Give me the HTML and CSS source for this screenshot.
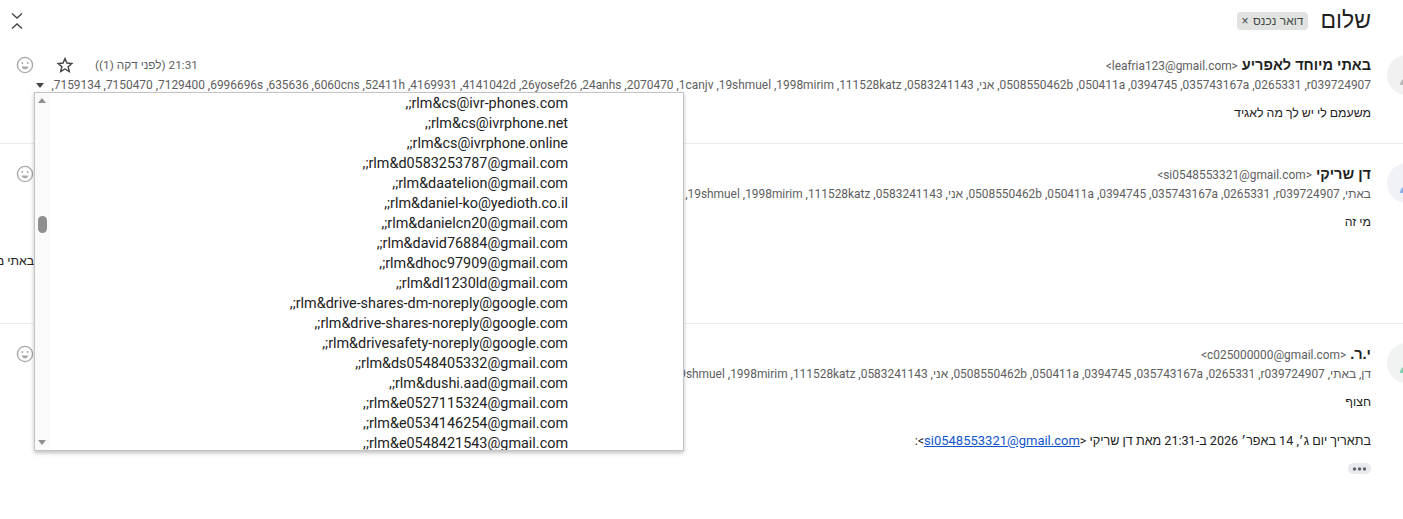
FILE: index.html
```html
<!DOCTYPE html>
<html lang="he" dir="rtl">
<head>
<meta charset="utf-8">
<title>שלום</title>
<link rel="stylesheet" href="styles.css">
</head>
<body>
<main class="thread">
  <header class="subject-bar">
    <h1 class="subject">שלום</h1>
    <span class="chip">דואר נכנס <span class="chip-x">×</span></span>
    <span class="spacer"></span>
    <svg class="collapse" width="12" height="16" viewBox="0 0 12 16" fill="none" stroke="#444746" stroke-width="1.4"><path d="M1 .5l5 4.500 5-4.500M1 15.500l5-4.500 5 4.500"/></svg>
  </header>

  <article class="msg msg-first">
    <div class="avatar avatar-grey"><svg width="40" height="40" viewBox="0 0 40 40"><path d="M13 30c0-3 2-7 7-7s7 4 7 7z" fill="#b9b9b9"/></svg></div>
    <div class="msg-main">
      <div class="head">
        <div class="from"><b class="name">באתי מיוחד לאפריע</b> <span class="addr">&lt;leafria123@gmail.com&gt;</span></div>
        <div class="meta">
          <span class="time">21:31 (לפני דקה (1))</span>
          <svg class="star" width="18" height="18" viewBox="0 0 24 24" fill="none" stroke="#444746" stroke-width="1.9" stroke-linejoin="miter"><path d="M12 3.4l2.6 6 6.5.6-4.9 4.3 1.5 6.4-5.7-3.4-5.7 3.4 1.5-6.4L2.900 10l6.500-.6z"/></svg>
          <svg class="smile" width="18" height="18" viewBox="0 0 18 18" fill="none" stroke="#a8a8a8" stroke-width="1.4"><circle cx="9" cy="9" r="7.600"/><circle cx="6.300" cy="7" r="1" fill="#a8a8a8" stroke="none"/><circle cx="11.700" cy="7" r="1" fill="#a8a8a8" stroke="none"/><path d="M5.500 10.500h7c-.6 1.900-2 2.800-3.500 2.800s-2.900-.9-3.500-2.800z" fill="#a8a8a8" stroke="none"/></svg>
        </div>
      </div>
      <div class="to">r039724907,&rlm; 0265331,&rlm; 035743167a,&rlm; 0394745,&rlm; 050411a,&rlm; 0508550462b,&rlm; אני,&rlm; 0583241143,&rlm; 111528katz,&rlm; 1998mirim,&rlm; 19shmuel,&rlm; 1canjv,&rlm; 2070470,&rlm; 24anhs,&rlm; 26yosef26,&rlm; 4141042d,&rlm; 4169931,&rlm; 52411h,&rlm; 6060cns,&rlm; 635636,&rlm; 6996696s,&rlm; 7129400,&rlm; 7150470,&rlm; 7159134,&rlm;<span class="to-arrow"></span></div>
      <p class="body">משעמם לי יש לך מה לאגיד</p>
    </div>
  </article>

  <article class="msg msg-second">
    <div class="avatar avatar-blue"><svg width="40" height="40" viewBox="0 0 40 40"><path d="M13 30c0-3 2-7 7-7s7 4 7 7z" fill="#86b2f2"/></svg></div>
    <div class="msg-main">
      <div class="head">
        <div class="from"><b class="name">דן שריקי</b> <span class="addr">&lt;si0548553321@gmail.com&gt;</span></div>
        <div class="meta">
          <svg class="smile" width="18" height="18" viewBox="0 0 18 18" fill="none" stroke="#a8a8a8" stroke-width="1.4"><circle cx="9" cy="9" r="7.600"/><circle cx="6.300" cy="7" r="1" fill="#a8a8a8" stroke="none"/><circle cx="11.700" cy="7" r="1" fill="#a8a8a8" stroke="none"/><path d="M5.500 10.500h7c-.6 1.900-2 2.800-3.500 2.800s-2.900-.9-3.500-2.800z" fill="#a8a8a8" stroke="none"/></svg>
        </div>
      </div>
      <div class="to">באתי,&rlm; r039724907,&rlm; 0265331,&rlm; 035743167a,&rlm; 0394745,&rlm; 050411a,&rlm; 0508550462b,&rlm; אני,&rlm; 0583241143,&rlm; 111528katz,&rlm; 1998mirim,&rlm; 19shmuel,&rlm; 1canjv,&rlm; 2070470,&rlm; 24anhs,&rlm; 26yosef26,&rlm; 4141042d,&rlm; 4169931</div>
      <p class="body">מי זה</p>
      <p class="body-far">באתי מיוחד לאפריע</p>
    </div>
  </article>

  <article class="msg msg-third">
    <div class="avatar avatar-green"><svg width="40" height="40" viewBox="0 0 40 40"><path d="M13 30c0-3 2-7 7-7s7 4 7 7z" fill="#7fd0ae"/></svg></div>
    <div class="msg-main">
      <div class="head">
        <div class="from"><b class="name">י.ר.</b> <span class="addr">&lt;c025000000@gmail.com&gt;</span></div>
        <div class="meta">
          <svg class="smile" width="18" height="18" viewBox="0 0 18 18" fill="none" stroke="#a8a8a8" stroke-width="1.4"><circle cx="9" cy="9" r="7.600"/><circle cx="6.300" cy="7" r="1" fill="#a8a8a8" stroke="none"/><circle cx="11.700" cy="7" r="1" fill="#a8a8a8" stroke="none"/><path d="M5.500 10.500h7c-.6 1.900-2 2.800-3.500 2.800s-2.900-.9-3.500-2.800z" fill="#a8a8a8" stroke="none"/></svg>
        </div>
      </div>
      <div class="to">דן,&rlm; באתי,&rlm; r039724907,&rlm; 0265331,&rlm; 035743167a,&rlm; 0394745,&rlm; 050411a,&rlm; 0508550462b,&rlm; אני,&rlm; 0583241143,&rlm; 111528katz,&rlm; 1998mirim,&rlm; 19shmuel,&rlm; 1canjv,&rlm; 2070470,&rlm; 24anhs,&rlm; 26yosef26,&rlm; 4141042d</div>
      <p class="body">חצוף</p>
      <p class="body quote">בתאריך יום ג׳, 14 באפר׳ 2026 ב-21:31 מאת דן שריקי &lt;<a class="link" href="#">si0548553321@gmail.com</a>&gt;:</p>
      <button class="more" type="button" aria-label="הצג עוד"><svg width="15" height="4" viewBox="0 0 15 4" fill="#5f6368"><circle cx="2.500" cy="2" r="1.700"/><circle cx="7.500" cy="2" r="1.700"/><circle cx="12.500" cy="2" r="1.700"/></svg></button>
    </div>
  </article>

  <div class="popup">
    <div class="popup-scroll">
      <span class="arrow-up"></span>
      <span class="thumb"></span>
      <span class="arrow-down"></span>
    </div>
    <ul class="popup-list">
      <li>rlm&amp;cs@ivr-phones.com;,</li>
      <li>rlm&amp;cs@ivrphone.net;,</li>
      <li>rlm&amp;cs@ivrphone.online;,</li>
      <li>rlm&amp;d0583253787@gmail.com;,</li>
      <li>rlm&amp;daatelion@gmail.com;,</li>
      <li>rlm&amp;daniel-ko@yedioth.co.il;,</li>
      <li>rlm&amp;danielcn20@gmail.com;,</li>
      <li>rlm&amp;david76884@gmail.com;,</li>
      <li>rlm&amp;dhoc97909@gmail.com;,</li>
      <li>rlm&amp;dl1230ld@gmail.com;,</li>
      <li>rlm&amp;drive-shares-dm-noreply@google.com;,</li>
      <li>rlm&amp;drive-shares-noreply@google.com;,</li>
      <li>rlm&amp;drivesafety-noreply@google.com;,</li>
      <li>rlm&amp;ds0548405332@gmail.com;,</li>
      <li>rlm&amp;dushi.aad@gmail.com;,</li>
      <li>rlm&amp;e0527115324@gmail.com;,</li>
      <li>rlm&amp;e0534146254@gmail.com;,</li>
      <li>rlm&amp;e0548421543@gmail.com;,</li>
    </ul>
  </div>
</main>
</body>
</html>
```
FILE: styles.css
```css
* { box-sizing: border-box; }
html, body { margin: 0; padding: 0; height: 100%; overflow: hidden; background: #fff; }
body { font-family: Roboto, "Liberation Sans", Arial, sans-serif; color: #222; }
.thread { position: relative; height: 519px; overflow: hidden; }

.subject-bar { display: flex; align-items: center; height: 40px; padding: 0 32px 0 11px; }
.subject { margin: 0 0 0 12px; font-size: 23px; font-weight: 400; line-height: 28px; color: #1f1f1f; font-family: "Liberation Sans", sans-serif; }
.chip { display: inline-flex; align-items: center; justify-content: space-between; width: 71px; height: 18px; padding: 0 5px 0 4px; margin-top: 1px; border-radius: 4px; background: #e1e3e1; color: #444746; font-size: 12px; font-family: "Liberation Sans", sans-serif; }
.chip-x { font-size: 12px; color: #444; }
.spacer { flex: 1; }
.collapse { display: block; margin-top: 1px; }

.msg { display: flex; align-items: flex-start; gap: 16px; border-bottom: 1px solid #ececec; margin-right: -24px; }
.msg-first { height: 104px; padding-top: 15px; }
.msg-second { height: 180px; padding-top: 20px; }
.msg-third { height: 180px; padding-top: 20px; border-bottom: 0; }
.avatar { flex: none; width: 40px; height: 40px; border-radius: 50%; overflow: hidden; }
.avatar svg { display: block; }
.avatar-grey { background: #f1f1f1; }
.avatar-blue { background: #f0f2f7; margin-top: -1px; }
.avatar-green { background: #f0f3f2; margin-top: -1px; }
.msg-main { flex: 1; min-width: 0; position: relative; }

.head { display: flex; justify-content: space-between; align-items: center; height: 20px; }
.from { white-space: nowrap; line-height: 20px; }
.name { font-size: 14.500px; font-weight: 700; color: #1f1f1f; font-family: "Liberation Sans", sans-serif; }
.addr { font-size: 11.900px; color: #5e5e5e; }
.meta { display: flex; align-items: center; gap: 22px; padding-left: 16px; }
.time { font-size: 11.800px; color: #5e5e5e; margin-left: -1px; }
.star { display: block; }
.smile { display: block; }

.to { height: 20px; margin-top: 0; font-size: 11.920px; line-height: 20px; color: #5e5e5e; white-space: nowrap; overflow: hidden; }
.to-arrow { display: inline-block; width: 0; height: 0; margin: 0 7px 1px 0; border: 4.500px solid transparent; border-top: 5px solid #444746; border-bottom: 0; }

.body { margin: 8px 0 0; font-size: 12.300px; line-height: 20px; color: #222; }
.body-far { margin: 19px 1337px 0 0; font-size: 12.300px; line-height: 20px; white-space: nowrap; color: #222; }
.body.quote { margin-top: 19px; font-size: 12.600px; }
.link { color: #1155cc; font-family: Roboto, sans-serif; font-size: 13px; }
.more { display: flex; align-items: center; justify-content: center; width: 23px; height: 11px; margin-top: 12px; padding: 0; border: 0; border-radius: 6px; background: #e8eaed; }

.popup { position: absolute; left: 34px; top: 92px; width: 650px; height: 359px; display: flex; flex-direction: row-reverse; background: #fff; border: 1px solid #c4c4c4; box-shadow: 0 2px 4px rgba(0,0,0,.25); overflow: hidden; }
.popup-scroll { position: relative; flex: none; width: 15px; background: #fafafa; }
.arrow-up, .arrow-down, .thumb { position: absolute; left: 3px; }
.arrow-up { top: 5px; border: 4.500px solid transparent; border-bottom: 5px solid #8f8f8f; border-top: 0; }
.arrow-down { bottom: 5px; border: 4.500px solid transparent; border-top: 5px solid #8f8f8f; border-bottom: 0; }
.thumb { top: 123px; width: 9px; height: 17px; border-radius: 5px; background: #8e8e8e; }
.popup-list { flex: 1; margin: 0; padding: 1px 115px 0 0; list-style: none; font-size: 14.400px; line-height: 20px; color: #222; }
.popup-list li { height: 20px; white-space: nowrap; }
```
